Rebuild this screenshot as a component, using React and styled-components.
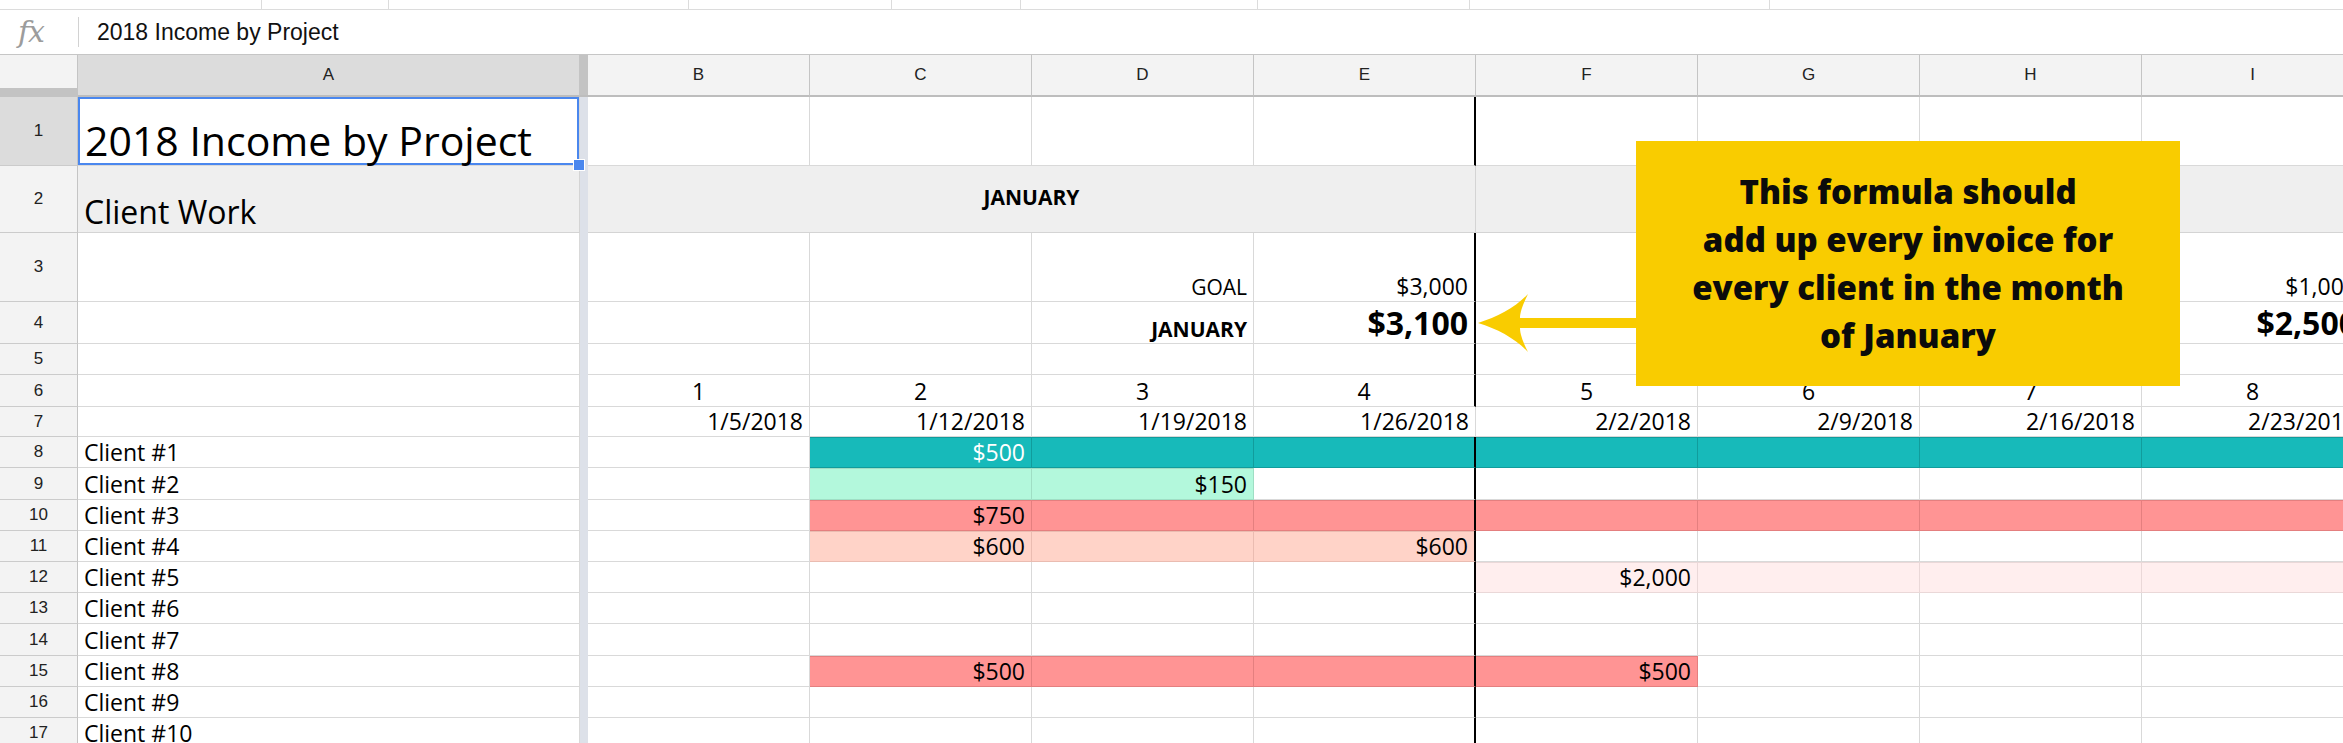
import React from 'react';
import styled, { createGlobalStyle } from 'styled-components';

const GlobalStyle = createGlobalStyle`
  html, body { margin: 0; padding: 0; background: #fff; }
  body { font-family: "Open Sans", "Liberation Sans", sans-serif; overflow: hidden; }
  #root { width: 100vw; height: 100vh; overflow: hidden; }
`;

const Page = styled.div`
  position: relative;
  width: 100%;
  height: 743px;
  overflow: hidden;
  background: #fff;
`;

const TopStrip = styled.div`
  display: flex;
  height: 10px;
  box-sizing: border-box;
  border-bottom: 1px solid #dcdcdc;
`;

const StripSeg = styled.div`
  flex: ${p => (p.$w ? `0 0 ${p.$w}px` : '1 1 auto')};
  box-sizing: border-box;
  border-right: ${p => (p.$w ? '1px solid #dcdcdc' : 'none')};
`;

const FormulaBar = styled.div`
  display: flex;
  align-items: center;
  height: 45px;
  box-sizing: border-box;
  border-bottom: 1px solid #c6c6c6;
`;

const FxLabel = styled.div`
  flex: 0 0 60px;
  padding-left: 18px;
  font-family: "DejaVu Serif", "Liberation Serif", serif;
  font-style: italic;
  font-size: 30px;
  color: #9c9c9c;
  letter-spacing: -1px;
  line-height: 1;
`;

const FxDivider = styled.div`
  flex: 0 0 1px;
  height: 30px;
  background: #d2d2d2;
`;

const FormulaText = styled.div`
  margin-left: 18px;
  font-family: "Liberation Sans", Arial, sans-serif;
  font-size: 23px;
  color: #111;
`;

const Sheet = styled.div`
  display: flex;
  flex-direction: column;
  width: max-content;
`;

const GridRow = styled.div`
  display: grid;
  grid-template-columns: 78px 502px 8px repeat(8, 222px);
  height: ${p => p.$h}px;
`;

const Corner = styled.div`
  box-sizing: border-box;
  background: #f3f3f3;
  border-right: 1px solid #c4c4c4;
  border-bottom: 9px solid #c3c3c3;
`;

const ColHead = styled.div`
  box-sizing: border-box;
  display: flex;
  align-items: center;
  justify-content: center;
  background: ${p => (p.$selected ? '#dcdcdc' : '#f3f3f3')};
  border-right: 1px solid #c4c4c4;
  border-bottom: 2px solid #bdbdbd;
  font-family: "Liberation Sans", Arial, sans-serif;
  font-size: 17px;
  color: #222;
`;

const HeadFreeze = styled.div`
  background: #c3c3c3;
  border-bottom: 2px solid #bdbdbd;
`;

const RowNum = styled.div`
  box-sizing: border-box;
  display: flex;
  align-items: center;
  justify-content: center;
  background: ${p => (p.$selected ? '#dcdcdc' : '#f3f3f3')};
  border-right: 1px solid #c4c4c4;
  border-bottom: 1px solid #cbcbcb;
  font-family: "Liberation Sans", Arial, sans-serif;
  font-size: 17px;
  color: #222;
`;

const FreezeBar = styled.div`
  background: #dde1e9;
`;

const justify = { left: 'flex-start', center: 'center', right: 'flex-end' };

const Cell = styled.div`
  box-sizing: border-box;
  display: flex;
  align-items: ${p => (p.$middle ? 'center' : 'flex-end')};
  justify-content: ${p => justify[p.$align || 'left']};
  grid-column: span ${p => p.$span || 1};
  padding: 0 6px 3px;
  background: ${p => p.$fill || '#fff'};
  border-right: ${p => (p.$mark ? '2px solid #000' : `1px solid ${p.$line || '#d9d9d9'}`)};
  border-bottom: 1px solid ${p => p.$line || '#d9d9d9'};
  box-shadow: ${p => (p.$fill && p.$edge ? `inset 0 1px 0 ${p.$line}` : 'none')};
  font-size: ${p => p.$size || 23}px;
  font-weight: ${p => (p.$bold ? 700 : 400)};
  color: ${p => p.$color || '#000'};
  line-height: 1.05;
  white-space: nowrap;
`;

const TitleCell = styled(Cell)`
  position: relative;
  z-index: 2;
  padding-left: 7px;
  box-shadow: inset 0 0 0 2px #4a87ee;
`;

const FillHandle = styled.span`
  position: absolute;
  right: -6px;
  bottom: -6px;
  width: 12px;
  height: 12px;
  box-sizing: border-box;
  background: #4a87ee;
  border: 1px solid #fff;
`;

const Callout = styled.div`
  position: absolute;
  left: 1636px;
  top: 141px;
  width: 544px;
  height: 245px;
  box-sizing: border-box;
  display: flex;
  flex-direction: column;
  align-items: center;
  justify-content: center;
  background: #f9cc00;
  font-family: "Open Sans", sans-serif;
  font-weight: 800;
  font-size: 33px;
  line-height: 48px;
  color: #0b0b0b;
  text-align: center;
  z-index: 3;
`;

const CalloutLine = styled.span`
  display: block;
`;

const Arrow = styled.svg`
  position: absolute;
  left: 1476px;
  top: 292px;
  z-index: 3;
`;

const FILLS = {
  grey: { fill: '#efefef', line: '#d4d4d4' },
  teal: { fill: '#17baba', line: '#119c9c', color: '#fff', edge: true },
  mint: { fill: '#b3f8dc', line: '#9fdec4', edge: true },
  salmon: { fill: '#ff9494', line: '#e47f7f', edge: true },
  peach: { fill: '#ffd3c8', line: '#eabcb1', edge: true },
  blush: { fill: '#ffeeee', line: '#ead8d8', edge: true },
};

const COLS = ['B', 'C', 'D', 'E', 'F', 'G', 'H', 'I'];

const blank = () => COLS.map(() => ({}));

const fillRow = (from, to, fill, texts = {}) =>
  COLS.map((c, i) => {
    const inRange = i >= COLS.indexOf(from) && i <= COLS.indexOf(to);
    const t = texts[c];
    return {
      ...(inRange ? { fill } : {}),
      ...(t ? { text: t, align: 'right' } : {}),
    };
  });

const withText = texts =>
  COLS.map(c => (texts[c] ? { align: 'right', ...texts[c] } : {}));

const DATES = ['1/5/2018', '1/12/2018', '1/19/2018', '1/26/2018', '2/2/2018', '2/9/2018', '2/16/2018', '2/23/2018'];

const ROWS = [
  { n: 1, h: 69, title: '2018 Income by Project', cells: blank() },
  { n: 2, h: 67, merged: true },
  {
    n: 3, h: 69,
    cells: withText({
      D: { text: 'GOAL', size: 21 },
      E: { text: '$3,000' },
      I: { text: '$1,000' },
    }),
  },
  {
    n: 4, h: 42,
    cells: withText({
      D: { text: 'JANUARY', size: 21, bold: true },
      E: { text: '$3,100', size: 32, bold: true },
      I: { text: '$2,500', size: 32, bold: true },
    }),
  },
  { n: 5, h: 31, cells: blank() },
  { n: 6, h: 32, cells: COLS.map((c, i) => ({ text: String(i + 1), align: 'center' })) },
  { n: 7, h: 30, noMark: true, cells: DATES.map(d => ({ text: d, align: 'right' })) },
  { n: 8, h: 31, a: 'Client #1', cells: fillRow('C', 'I', 'teal', { C: '$500' }) },
  { n: 9, h: 32, a: 'Client #2', cells: fillRow('C', 'D', 'mint', { D: '$150' }) },
  { n: 10, h: 31, a: 'Client #3', cells: fillRow('C', 'I', 'salmon', { C: '$750' }) },
  { n: 11, h: 31, a: 'Client #4', cells: fillRow('C', 'E', 'peach', { C: '$600', E: '$600' }) },
  { n: 12, h: 31, a: 'Client #5', cells: fillRow('F', 'I', 'blush', { F: '$2,000' }) },
  { n: 13, h: 31, a: 'Client #6', cells: blank() },
  { n: 14, h: 32, a: 'Client #7', cells: blank() },
  { n: 15, h: 31, a: 'Client #8', cells: fillRow('C', 'F', 'salmon', { C: '$500', F: '$500' }) },
  { n: 16, h: 31, a: 'Client #9', cells: blank() },
  { n: 17, h: 31, a: 'Client #10', cells: blank() },
];

function DataCell({ cell, col, mark }) {
  const f = cell.fill ? FILLS[cell.fill] : {};
  return (
    <Cell
      $align={cell.align}
      $fill={f.fill}
      $line={f.line}
      $edge={f.edge}
      $color={f.color}
      $size={cell.size}
      $bold={cell.bold}
      $mark={mark && col === 'E'}
    >
      {cell.text}
    </Cell>
  );
}

function MergedMonthRow({ row }) {
  const g = FILLS.grey;
  return (
    <GridRow $h={row.h}>
      <RowNum>{row.n}</RowNum>
      <Cell $fill={g.fill} $line={g.line} $size={32}>Client Work</Cell>
      <FreezeBar />
      <Cell $span={4} $middle $align="center" $fill={g.fill} $line={g.line} $bold $size={21}>
        JANUARY
      </Cell>
      {['F', 'G', 'H', 'I'].map(c => (
        <Cell key={c} $fill={g.fill} $line={g.line} />
      ))}
    </GridRow>
  );
}

function SheetRow({ row }) {
  if (row.merged) return <MergedMonthRow row={row} />;
  return (
    <GridRow $h={row.h}>
      <RowNum $selected={!!row.title}>{row.n}</RowNum>
      {row.title ? (
        <TitleCell $size={41}>
          {row.title}
          <FillHandle />
        </TitleCell>
      ) : (
        <Cell>{row.a}</Cell>
      )}
      <FreezeBar />
      {row.cells.map((cell, i) => (
        <DataCell key={COLS[i]} cell={cell} col={COLS[i]} mark={!row.noMark} />
      ))}
    </GridRow>
  );
}

const STRIP = [262, 127, 300, 203, 129, 237, 212, 300, 0];

export default function App() {
  return (
    <Page>
      <GlobalStyle />
      <TopStrip>
        {STRIP.map((w, i) => (
          <StripSeg key={i} $w={w} />
        ))}
      </TopStrip>
      <FormulaBar>
        <FxLabel>fx</FxLabel>
        <FxDivider />
        <FormulaText>2018 Income by Project</FormulaText>
      </FormulaBar>
      <Sheet>
        <GridRow $h={42}>
          <Corner />
          <ColHead $selected>A</ColHead>
          <HeadFreeze />
          {COLS.map(c => (
            <ColHead key={c}>{c}</ColHead>
          ))}
        </GridRow>
        {ROWS.map(r => (
          <SheetRow key={r.n} row={r} />
        ))}
      </Sheet>
      <Callout>
        <CalloutLine>This formula should</CalloutLine>
        <CalloutLine>add up every invoice for</CalloutLine>
        <CalloutLine>every client in the month</CalloutLine>
        <CalloutLine>of January</CalloutLine>
      </Callout>
      <Arrow width="162" height="64" viewBox="0 0 162 64">
        <path
          d="M2 31 C 22 25, 40 15, 52 2 C 47 12, 44 20, 44 26 L 162 26 L 162 36 L 44 36 C 44 42, 47 50, 52 60 C 40 47, 22 37, 2 31 Z"
          fill="#f9cc00"
        />
      </Arrow>
    </Page>
  );
}
